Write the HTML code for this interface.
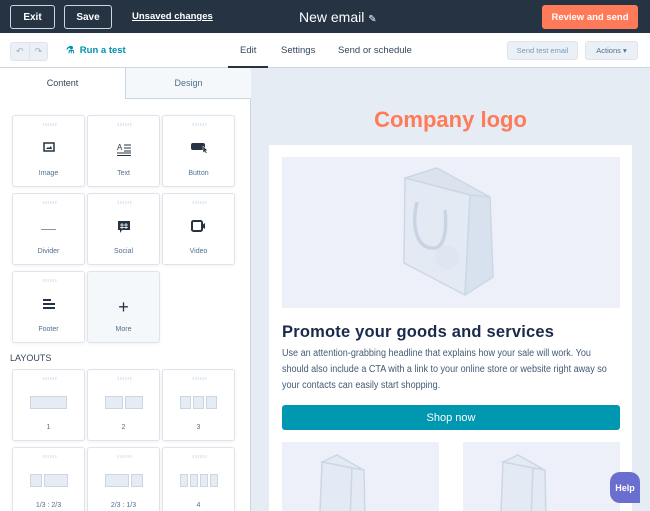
<!DOCTYPE html>
<html><head><meta charset="utf-8"><style>
*{box-sizing:border-box;margin:0;padding:0}
html,body{width:650px;height:511px;overflow:hidden}
body{font-family:"Liberation Sans",sans-serif;background:#e5ecf4;position:relative;color:#33475b}
.abs{position:absolute}
.top{left:0;top:0;width:650px;height:33px;background:#253342}
.btn{position:absolute;top:5px;height:24px;border:1px solid #cbd6e2;border-radius:3px;color:#fff;font-size:10px;font-weight:bold;display:flex;align-items:center;justify-content:center;background:#253342}
.bar2{left:0;top:33px;width:650px;height:35px;background:#fff;border-bottom:1px solid #cbd6e2}
.left{left:0;top:68px;width:251px;height:443px;background:#fff;border-right:1px solid #cbd6e2}
.card{position:absolute;width:73px;height:72px;border:1px solid #dfe3eb;border-radius:3px;background:#fff;box-shadow:0 1px 3px rgba(0,0,0,.06);font-size:7px;color:#516f90;text-align:center}
.card .d{position:absolute;top:7px;left:29px;width:15px;height:3px;background:radial-gradient(circle,#cbd6e2 0.6px,transparent 0.8px) 0 0/2.5px 2px}
.card .l{position:absolute;top:54px;width:100%}
.card .i{position:absolute;top:26px;left:0;width:100%;display:flex;justify-content:center;gap:2px}
.bx{background:#e5ecf4;border:1px solid #cbd6e2;height:13px}
.bag{background:#eef0f9;overflow:hidden}
</style></head><body>
<div class="abs top"></div>
<div class="btn" style="left:10px;width:45px">Exit</div>
<div class="btn" style="left:64px;width:48px">Save</div>
<div class="abs" style="left:132px;top:11px;font-size:9.5px;color:#fff;text-decoration:underline;font-weight:bold">Unsaved changes</div>
<div class="abs" style="left:299px;top:9px;font-size:14px;color:#fff">New email <span style="font-size:10px">✎</span></div>
<div class="abs" style="left:542px;top:5px;width:96px;height:24px;background:#ff7a59;border-radius:3px;color:#fff;font-size:9.5px;font-weight:bold;display:flex;align-items:center;justify-content:center">Review and send</div>
<div class="abs bar2"></div>
<div class="abs" style="left:10px;top:42px;width:38px;height:19px;border:1px solid #dfe3eb;border-radius:3px;background:#eaf0f6;font-size:9px;color:#9fb0c4;display:flex"><span style="flex:1;text-align:center;border-right:1px solid #dfe3eb;line-height:17px">↶</span><span style="flex:1;text-align:center;line-height:17px">↷</span></div>
<div class="abs" style="left:66px;top:45px;font-size:9.5px;color:#0091ae;font-weight:bold">⚗&nbsp; Run a test</div>
<div class="abs" style="left:240px;top:45px;font-size:9.5px;color:#33475b">Edit</div>
<div class="abs" style="left:228px;top:66px;width:40px;height:2px;background:#253342"></div>
<div class="abs" style="left:281px;top:45px;font-size:9.5px">Settings</div>
<div class="abs" style="left:338px;top:45px;font-size:9.5px">Send or schedule</div>
<div class="abs" style="left:507px;top:41px;width:71px;height:19px;border:1px solid #dfe3eb;border-radius:3px;background:#eaf0f6;font-size:7.5px;color:#7c98b6;display:flex;align-items:center;justify-content:center">Send test email</div>
<div class="abs" style="left:585px;top:41px;width:53px;height:19px;border:1px solid #dfe3eb;border-radius:3px;background:#eaf0f6;font-size:7.5px;color:#516f90;display:flex;align-items:center;justify-content:center">Actions ▾</div>
<div class="abs left"></div>
<div class="abs" style="left:0;top:68px;width:125px;height:31px;font-size:9px;text-align:center;line-height:31px">Content</div>
<div class="abs" style="left:125px;top:68px;width:126px;height:31px;background:#f5f8fa;border-left:1px solid #cbd6e2;border-bottom:1px solid #cbd6e2;font-size:9px;text-align:center;line-height:31px;color:#516f90">Design</div>

<div class="card" style="left:12px;top:115px"><div class="d"></div><div class="i"><svg width="12" height="10"><rect x="1" y="1" width="10" height="8" fill="none" stroke="#253342" stroke-width="1.5"/><path d="M3 7l2-2 1 1 2-2 1 3z" fill="#253342"/></svg></div><div class="l">Image</div></div>
<div class="card" style="left:87px;top:115px"><div class="d"></div><div class="i" style="top:27px"><svg width="14" height="13"><text x="0" y="7" font-size="8" fill="#253342" font-family="Liberation Sans">A</text><path d="M7 2h7M7 5h7M7 8h7M0 10h14M0 12.5h14" stroke="#253342" stroke-width="0.9"/></svg></div><div class="l">Text</div></div>
<div class="card" style="left:162px;top:115px"><div class="d"></div><div class="i"><svg width="18" height="12"><rect x="1" y="1" width="14" height="7" rx="2" fill="#253342"/><path d="M13 4l0 7 1.5-1.5 1.5 2 1-.7-1.5-2 2-.3z" fill="#253342" stroke="#fff" stroke-width=".5"/></svg></div><div class="l">Button</div></div>
<div class="card" style="left:12px;top:193px"><div class="d"></div><div class="i" style="top:35px"><div style="width:15px;height:1px;background:#7c98b6"></div></div><div class="l">Divider</div></div>
<div class="card" style="left:87px;top:193px"><div class="d"></div><div class="i"><svg width="14" height="14"><path d="M1 1h12v9H5l-2 3v-3H1z" fill="#253342"/><path d="M5 3v6M9 3v6M3 5h8M3 7.5h8" stroke="#fff" stroke-width=".8"/></svg></div><div class="l">Social</div></div>
<div class="card" style="left:162px;top:193px"><div class="d"></div><div class="i"><svg width="15" height="12"><rect x="1" y="1" width="10" height="10" rx="1.5" fill="none" stroke="#253342" stroke-width="2"/><path d="M11 5l3-2v6l-3-2z" fill="#253342"/></svg></div><div class="l">Video</div></div>
<div class="card" style="left:12px;top:271px"><div class="d"></div><div class="i"><svg width="12" height="12"><path d="M0 1h8v2H0zM0 5h12v2H0zM0 9h12v2H0z" fill="#253342"/></svg></div><div class="l">Footer</div></div>
<div class="card" style="left:87px;top:271px;background:#f5f8fa"><div class="i" style="top:25px;font-size:18px;color:#253342;font-weight:300">+</div><div class="l">More</div></div>

<div class="abs" style="left:10px;top:353px;font-size:9px;color:#33475b">LAYOUTS</div>
<div class="card" style="left:12px;top:369px"><div class="d"></div><div class="i"><div class="bx" style="width:37px"></div></div><div class="l">1</div></div>
<div class="card" style="left:87px;top:369px"><div class="d"></div><div class="i"><div class="bx" style="width:18px"></div><div class="bx" style="width:18px"></div></div><div class="l">2</div></div>
<div class="card" style="left:162px;top:369px"><div class="d"></div><div class="i"><div class="bx" style="width:11px"></div><div class="bx" style="width:11px"></div><div class="bx" style="width:11px"></div></div><div class="l">3</div></div>
<div class="card" style="left:12px;top:447px"><div class="d"></div><div class="i"><div class="bx" style="width:12px"></div><div class="bx" style="width:24px"></div></div><div class="l">1/3 : 2/3</div></div>
<div class="card" style="left:87px;top:447px"><div class="d"></div><div class="i"><div class="bx" style="width:24px"></div><div class="bx" style="width:12px"></div></div><div class="l">2/3 : 1/3</div></div>
<div class="card" style="left:162px;top:447px"><div class="d"></div><div class="i"><div class="bx" style="width:8px"></div><div class="bx" style="width:8px"></div><div class="bx" style="width:8px"></div><div class="bx" style="width:8px"></div></div><div class="l">4</div></div>

<div class="abs" style="left:269px;top:107px;width:363px;text-align:center;font-size:22px;font-weight:bold;color:#ff7a59">Company logo</div>
<div class="abs" style="left:269px;top:145px;width:363px;height:366px;background:#fff"></div>
<div class="abs bag" style="left:282px;top:157px;width:338px;height:151px"><svg width="338" height="151"><g fill="#e4eaf4" stroke="#ccd7e6" stroke-width="1.5" stroke-linejoin="round"><path d="M123 21L155 11 208 40 188 38z" fill="#dbe3ef"/><path d="M123 21L188 38 183 138 122 106z"/><path d="M188 38L208 40 211 120 183 138z" fill="#d8e1ee"/></g><path d="M135 45c-6 25 0 48 18 46 10-2 12-20 10-38" fill="none" stroke="#c8d4e4" stroke-width="3.5"/><circle cx="165" cy="100" r="12" fill="#dfe6f1"/></svg></div>
<div class="abs" style="left:282px;top:323px;font-size:16.5px;font-weight:bold;color:#1a2a4c;letter-spacing:.2px">Promote your goods and services</div>
<div class="abs" style="left:282px;top:346px;font-size:9.9px;line-height:16px;color:#425b76;white-space:nowrap;transform:scaleX(0.915);transform-origin:0 0">Use an attention-grabbing headline that explains how your sale will work. You<br>should also include a CTA with a link to your online store or website right away so<br>your contacts can easily start shopping.</div>
<div class="abs" style="left:282px;top:405px;width:338px;height:25px;background:#0098b0;border-radius:3px;color:#fff;font-size:11px;display:flex;align-items:center;justify-content:center">Shop now</div>
<div class="abs bag" style="left:282px;top:442px;width:157px;height:69px"><svg width="157" height="69"><g fill="#e4eaf4" stroke="#ccd7e6" stroke-width="1.5"><path d="M40 20L55 13 80 27 70 26z"/><path d="M40 20L70 26 68 80 38 70z"/><path d="M70 26L82 28 83 80 68 80z"/></g></svg></div>
<div class="abs bag" style="left:463px;top:442px;width:157px;height:69px"><svg width="157" height="69"><g fill="#e4eaf4" stroke="#ccd7e6" stroke-width="1.5"><path d="M40 20L55 13 80 27 70 26z"/><path d="M40 20L70 26 68 80 38 70z"/><path d="M70 26L82 28 83 80 68 80z"/></g></svg></div>
<div class="abs" style="left:610px;top:472px;width:30px;height:31px;background:#6a6fcf;border-radius:10px 10px 0 10px;color:#fff;font-size:9px;font-weight:bold;display:flex;align-items:center;justify-content:center">Help</div>
</body></html>
